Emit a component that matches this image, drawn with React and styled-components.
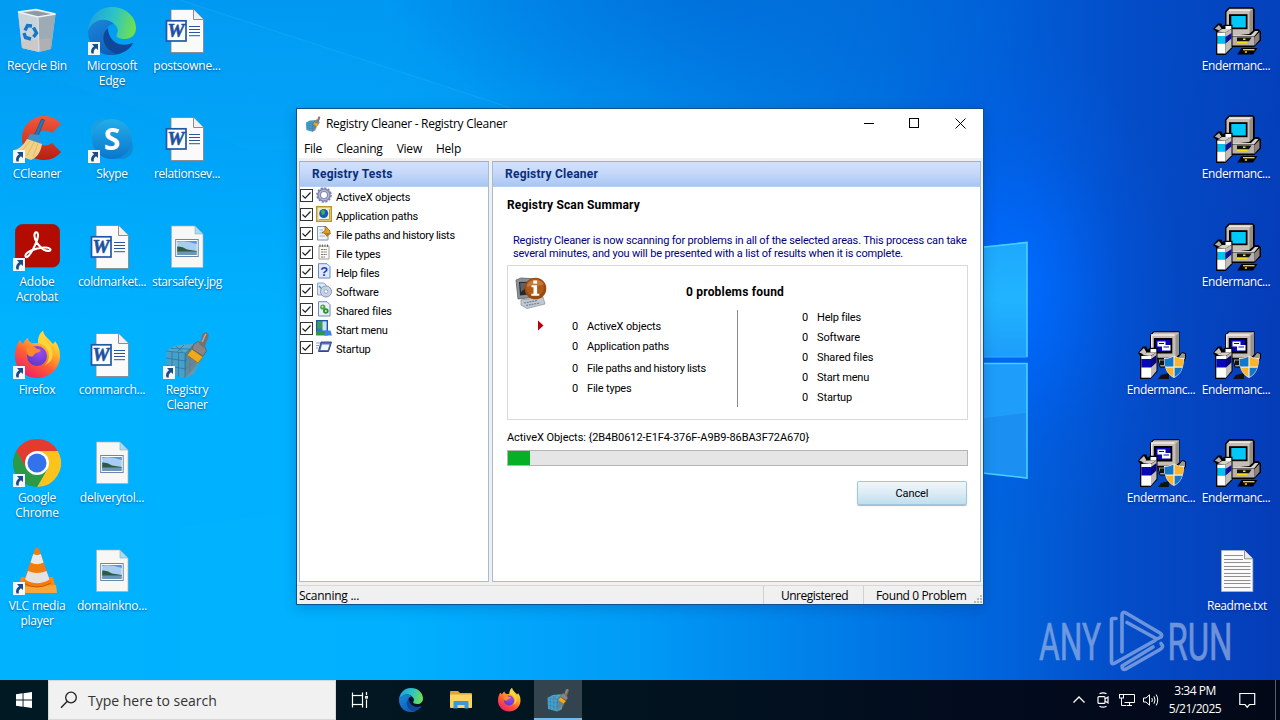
import React from "react";
import styled, { createGlobalStyle, css } from "styled-components";

const ui = `"Open Sans", "Noto Sans", sans-serif`;
const classic = `Roboto, "Liberation Sans", sans-serif`;

const GlobalStyle = createGlobalStyle`
  * { box-sizing: border-box; }
  body { margin: 0; overflow: hidden; font-family: ${ui}; font-size: 12px; }
  svg { display: block; flex: none; }
`;

/* ---------- desktop ---------- */

const Screen = styled.div`
  position: relative;
  width: 1280px;
  height: 720px;
  display: grid;
  grid-template-rows: 680px 40px;
  overflow: hidden;
  background: #0078e0;
`;

const Wallpaper = styled.svg`
  position: absolute;
  inset: 0;
`;

const Desktop = styled.main`
  position: relative;
  display: flex;
  justify-content: space-between;
  padding-right: 6px;
`;

const IconGrid = styled.div`
  display: grid;
  grid-template-rows: repeat(6, 108px);
  grid-auto-columns: 74px;
  grid-auto-flow: column;
  column-gap: 1px;
`;

const Shortcut = styled.div`
  position: relative;
  display: flex;
  flex-direction: column;
  align-items: center;
  padding-top: 7px;
  ${(p) => p.$row && css`grid-row: ${p.$row};`}
  ${(p) => p.$col && css`grid-column: ${p.$col};`}
`;

const ShortcutLabel = styled.span`
  margin-top: 3px;
  width: 80px;
  padding-right: ${(p) => p.$trim || 0}px;
  color: #fff;
  font-size: 12px;
  line-height: 15px;
  letter-spacing: ${(p) => p.$spacing ?? -0.25}px;
  text-align: center;
  white-space: pre-line;
  text-shadow: 0 1px 2px rgba(0, 20, 70, 0.55);
`;

const ArrowBadge = styled.svg`
  position: absolute;
  left: 13px;
  top: 42px;
`;

/* ---------- window ---------- */

const Window = styled.section`
  position: absolute;
  left: 296px;
  top: 108px;
  width: 688px;
  height: 497px;
  display: flex;
  flex-direction: column;
  background: #f0f0f0;
  border: 1px solid #10508f;
  box-shadow: 0 3px 12px rgba(0, 20, 70, 0.2);
  color: #000;
`;

const TitleBar = styled.header`
  display: flex;
  align-items: center;
  height: 30px;
  padding: 0 0 0 8px;
  background: #fff;
`;

const Title = styled.h1`
  flex: 1;
  margin: 0 0 0 5px;
  font-size: 12px;
  font-weight: 400;
  line-height: 16px;
  letter-spacing: -0.3px;
`;

const CaptionButton = styled.button`
  display: flex;
  align-items: center;
  justify-content: center;
  width: 46px;
  height: 30px;
  padding: 0 0 2px;
  border: 0;
  background: transparent;
`;

const MenuBar = styled.nav`
  display: flex;
  gap: 14px;
  height: 19px;
  padding-left: 7px;
  background: #fff;
`;

const MenuItem = styled.span`
  line-height: 20px;
  letter-spacing: -0.22px;
`;

const Body = styled.div`
  display: grid;
  grid-template-columns: 190px 489px;
  gap: 3px;
  height: 421px;
  margin: 3px 0 0 2px;
`;

const Panel = styled.section`
  display: flex;
  flex-direction: column;
  border: 1px solid #a9bccf;
  border-top-color: #8fb4e0;
  background: #fff;
`;

const PanelHeader = styled.h2`
  height: 25px;
  margin: 0;
  padding-left: 12px;
  background: linear-gradient(#d2e0fd, #c6d8fa 45%, #a8c7f2);
  border-bottom: 1px solid #b6cff2;
  color: #0a2f78;
  font: 700 12px/25px ${classic};
  letter-spacing: 0.23px;
`;

const TestRow = styled.label`
  display: flex;
  align-items: flex-start;
  height: 19px;
  font: 11px/22px ${classic};
  letter-spacing: ${(p) => p.$spacing ?? -0.1}px;
`;

const CheckBox = styled.span`
  display: flex;
  width: 13px;
  height: 13px;
  margin: 2px 3px 0 0;
  border: 1px solid #333;
  background: #fff;
`;

const TestIcon = styled.svg`
  margin: 0 4px 0 0;
`;

const Content = styled.div`
  display: flex;
  flex-direction: column;
  align-items: flex-start;
  padding: 10px 12px 0 14px;
  font: 11px/13px ${classic};
`;

const Heading = styled.h3`
  margin: 0;
  font: 700 12px/16px ${classic};
  letter-spacing: 0.16px;
`;

const Intro = styled.p`
  margin: 21px 0 0 6px;
  color: #000080;
  white-space: pre;
  letter-spacing: -0.165px;
`;

const Summary = styled.div`
  display: flex;
  flex-direction: column;
  width: 461px;
  height: 155px;
  margin-top: 5px;
  padding: 11px 7px 0;
  border: 1px solid #d9d9d9;
`;

const SummaryHead = styled.div`
  display: flex;
  height: 33px;
`;

const SummaryTitle = styled.h3`
  margin: 7px 0 0 139px;
  font: 700 12px/16px ${classic};
  letter-spacing: 0.2px;
`;

const Columns = styled.div`
  display: flex;
  align-items: flex-start;
`;

const PointerSlot = styled.div`
  display: flex;
  width: 57px;
  padding: 10px 0 0 23px;
`;

const CountList = styled.div`
  display: flex;
  flex-direction: column;
  width: ${(p) => p.$width}px;
  margin-top: ${(p) => p.$top}px;
`;

const Count = styled.div`
  display: flex;
  gap: 8px;
  height: 20px;
  margin-bottom: ${(p) => p.$gap || 0}px;
  line-height: 20px;
  letter-spacing: ${(p) => p.$spacing ?? -0.12}px;
`;

const CountValue = styled.span`
  width: 7px;
`;

const Divider = styled.div`
  width: 1px;
  height: 97px;
  margin-right: 64px;
  background: #8a8a8a;
`;

const Current = styled.div`
  margin-top: 11px;
  letter-spacing: -0.06px;
`;

const Progress = styled.div`
  width: 461px;
  height: 16px;
  margin-top: 6px;
  border: 1px solid #b5b5b5;
  background: #e5e5e5;
`;

const ProgressFill = styled.div`
  width: 4.8%;
  height: 14px;
  background: #06b025;
`;

const CancelButton = styled.button`
  align-self: flex-end;
  width: 110px;
  height: 24px;
  margin: 15px 1px 0 0;
  padding: 1px 0 0;
  border: 1px solid #9fc6da;
  border-radius: 2px;
  background: linear-gradient(#eef6fa, #dcebf4 50%, #c0dfee);
  box-shadow: 0 1px 1px rgba(0, 0, 0, 0.3);
  color: #000;
  font: 11px/21px ${classic};
  letter-spacing: -0.1px;
`;

const StatusBar = styled.footer`
  display: flex;
  height: 19px;
  margin-top: 3px;
  border-top: 1px solid #d7d7d7;
  font-size: 12px;
  line-height: 20px;
`;

const StatusCell = styled.span`
  width: ${(p) => p.$width}px;
  padding-left: ${(p) => p.$inset}px;
  letter-spacing: ${(p) => p.$spacing}px;
  border-left: ${(p) => (p.$rule ? "1px solid #d0d0d0" : "0")};
  white-space: nowrap;
`;

const Grip = styled.svg`
  margin: 8px 0 0 auto;
`;

/* ---------- taskbar ---------- */

const Taskbar = styled.footer`
  position: relative;
  display: flex;
  background: linear-gradient(90deg, #011923, #01151f 45%, #020c1e 75%, #020818);
  color: #fff;
`;

const TaskButton = styled.div`
  display: flex;
  align-items: center;
  justify-content: center;
  width: ${(p) => p.$width || 48}px;
  height: 40px;
  ${(p) =>
    p.$active &&
    css`
      background: #33444e;
      border-bottom: 2px solid #76b9ed;
      padding-top: 2px;
    `}
`;

const SearchBox = styled.div`
  display: flex;
  align-items: center;
  gap: 10px;
  width: 288px;
  padding-left: 11px;
  border: 1px solid #d6d8da;
  background: #f1f1f1;
  color: #333;
  font-size: 14px;
`;

const Tray = styled.div`
  display: flex;
  align-items: center;
  gap: 8px;
  margin-left: auto;
`;

const Clock = styled.div`
  display: flex;
  flex-direction: column;
  align-items: center;
  width: 56px;
  font-size: 12px;
  line-height: 18px;
  letter-spacing: -0.5px;
`;

const Notifications = styled.div`
  width: 45px;
  height: 40px;
  padding: 12px 0 0 8px;
  border-right: 1px solid #55606a;
  margin-right: 4px;
`;

const Watermark = styled.div`
  position: absolute;
  left: 1036px;
  top: 600px;
`;

/* ---------- icon drawings ---------- */

const RecycleBin = () => (
  <svg width="48" height="48" viewBox="0 0 48 48">
    <path d="M5 5 L23 2.500 L42.500 7 L38 42 L26 45 L9 41 Z" fill="#b9c4cc" />
    <path d="M5 5 L25 9 L26 45 L9 41 Z" fill="#c9d3da" />
    <path d="M25 9 L42.500 7 L38 42 L26 45 Z" fill="#9dabb5" />
    <path d="M7 6 L23 4 L40 7.500 L25 10.500 Z" fill="#8c9aa4" />
    <path d="M8 34 L38 31 L37 42 L26 45 L9 41 Z" fill="#d8b8a8" opacity=".35" />
    <path d="M5 5 L23 2.500 L42.500 7 L25 10 Z" fill="none" stroke="#eef3f6" strokeWidth="1.300" />
    <path d="M25 10 L26 44" stroke="#dfe6ea" />
    <g fill="none" stroke="#1677c8" strokeWidth="3.400">
      <path d="M12 23.500 L14.500 18.500 L19 19" />
      <path d="M20.500 20.500 L23.500 26 L20.500 30" />
      <path d="M18 32 L12.500 30.500 L11 26" />
    </g>
  </svg>
);

const Edge = ({ size = 48 }) => (
  <svg width={size} height={size} viewBox="0 0 48 48">
    <defs>
      <linearGradient id="edgeTop" x1="0" y1=".3" x2="1" y2=".5">
        <stop offset="0" stopColor="#1ea0e0" />
        <stop offset=".5" stopColor="#2bc3c8" />
        <stop offset="1" stopColor="#6fe04f" />
      </linearGradient>
      <linearGradient id="edgeBody" x1="0" y1="0" x2=".6" y2="1">
        <stop offset="0" stopColor="#1b88dc" />
        <stop offset="1" stopColor="#0d5fb8" />
      </linearGradient>
    </defs>
    <path d="M0 24 C1 9 11 0 24 0 C38 0 48 10 48 21 C48 28 43 32 37 32 C31 32 28 30 28.500 28 C31 24 30 20 26 17 C18 10 5 13 0 24 Z" fill="url(#edgeTop)" />
    <path d="M0 24 C4 13 17 9 26 17 C20 17 18 22 18 27 C18 37 26 45 34 46 C17 53 0 42 0 24 Z" fill="url(#edgeBody)" />
    <path d="M20 21 C11 29 16 43 29 47 C36 46 42 42 45 36.500 C44.500 35.500 44 36 43 36.500 C32 41 20 34 20 21 Z" fill="#10479b" />
  </svg>
);

const PageFold = ({ tone = "#8a7f7a" }) => (
  <>
    <path d="M8 2.500 H30.500 L40.500 12.500 V45.500 H8 Z" fill="#fbfafa" stroke={tone} strokeWidth=".8" />
    <path d="M30.500 2.500 V12.500 H40.500" fill="#eef1f3" stroke={tone} strokeWidth=".9" />
  </>
);

const WordDoc = () => (
  <svg width="48" height="48" viewBox="0 0 48 48">
    <PageFold />
    <path d="M26 19.500 H37 M26 22.500 H37 M26 25.500 H37 M26 28.700 H37" stroke="#2b579a" strokeWidth="1" />
    <rect x="3.500" y="13.800" width="19.500" height="20.200" fill="#fff" stroke="#2257a8" strokeWidth="1.700" />
    <text x="13" y="30" fontFamily="Liberation Serif, serif" fontWeight="700" fontStyle="italic" fontSize="19" textAnchor="middle" textLength="17" lengthAdjust="spacingAndGlyphs" fill="#1d50a2" stroke="#1d50a2" strokeWidth=".6">W</text>
  </svg>
);

const ImageDoc = () => (
  <svg width="48" height="48" viewBox="0 0 48 48">
    <path d="M8.500 3 H32 L40 11 V44.500 H8.500 Z" fill="#f7f7f5" stroke="#b0b0aa" strokeWidth=".7" />
    <path d="M32 3 V11 H40 Z" fill="#a9dcf2" stroke="#8fb0b8" strokeWidth=".6" />
    <rect x="12.700" y="16.500" width="22.500" height="17" fill="#fff" stroke="#6a86a8" strokeWidth="1" />
    <rect x="14.200" y="18" width="19.500" height="14" fill="#a8cdf0" />
    <path d="M14.200 19 Q22 17 33.700 21 V18 H14.200 Z" fill="#5c94dc" />
    <path d="M14.200 23.500 Q19 23 24 26.500 L33.700 28 V29 H14.200 Z" fill="#2e5a44" />
    <path d="M14.200 28.500 H33.700 V32 H14.200 Z" fill="#6d96b8" />
  </svg>
);

const TextDoc = () => (
  <svg width="48" height="48" viewBox="0 0 48 48">
    <path d="M8.500 3.500 H31.500 L39.800 11.800 V44.500 H8.500 Z" fill="#fafafa" stroke="#b8b8b8" strokeWidth=".7" />
    <path d="M31.500 3.500 V11.800 H39.800" fill="#e9e9e9" stroke="#777" strokeWidth=".8" />
    <path d="M11 8.500 H30 M11 12.500 H30 M11 15.500 H37.500 M11 19.500 H37.500 M11 22.500 H37.500 M11 26.500 H37.500 M11 29.500 H37.500 M11 33.500 H37.500 M11 36.500 H37.500 M11 40.500 H37.500" stroke="#8f8f8f" strokeWidth="1" />
  </svg>
);

const CCleaner = () => (
  <svg width="48" height="48" viewBox="0 0 48 48">
    <defs>
      <linearGradient id="ccRed" x1="0" y1="0" x2="0" y2="1">
        <stop offset="0" stopColor="#f4593c" />
        <stop offset="1" stopColor="#b81f12" />
      </linearGradient>
    </defs>
    <path d="M48 9 C43 3 37 1 31 1 C19 1 9 11 9 23 C9 36 19 45 31 45 C38 45 44 42 48 37 L39 28 C33 33 23 30 23 23 C23 16 32 13 39 18 Z" fill="url(#ccRed)" />
    <path d="M28.500 4 L31.500 5 L25 21 L21.500 20 Z" fill="#2478b8" stroke="#14507f" strokeWidth=".7" />
    <path d="M17 19 L26 20 L29 29 L14 25 Z" fill="#3c93cc" />
    <path d="M14 24 L29 29 C28 36 25 42 18 45 L7 41 L1 35 C7 34 11 29 14 24 Z" fill="#f3d287" />
    <path d="M17 26 L8 37 M21 27 L14 41 M25 28.500 L20 42" stroke="#e0b968" strokeWidth="1" />
  </svg>
);

const Skype = () => (
  <svg width="48" height="48" viewBox="0 0 48 48">
    <defs>
      <linearGradient id="skype" x1="0" y1="0" x2="0" y2="1">
        <stop offset="0" stopColor="#22aeea" />
        <stop offset="1" stopColor="#0a76cc" />
      </linearGradient>
    </defs>
    <circle cx="15" cy="16" r="12.500" fill="#1a9fe4" />
    <circle cx="33" cy="32" r="12" fill="#0f8bd8" />
    <circle cx="24" cy="24" r="20" fill="url(#skype)" />
    <text x="24" y="34.500" textAnchor="middle" fontFamily="Open Sans, sans-serif" fontWeight="700" fontSize="30" fill="#fff">S</text>
  </svg>
);

const Acrobat = () => (
  <svg width="48" height="48" viewBox="0 0 48 48">
    <rect x="2.500" y="1.500" width="44" height="42.500" rx="7" fill="#b30b00" stroke="#8f1a10" strokeWidth=".8" />
    <path d="M12.500 33 C12 29 22 25 31 24.500 C38 24 39 28 35.500 28 C29 28 22 19 21.500 13 C21 8 25.500 8 25 13 C24 20 17 33 14 34 C13 34.300 12.500 34 12.500 33 Z" fill="none" stroke="#fff" strokeWidth="2.100" />
  </svg>
);

const Firefox = ({ size = 48 }) => (
  <svg width={size} height={size} viewBox="0 0 48 48">
    <defs>
      <linearGradient id="ffBody" x1=".85" y1=".05" x2=".25" y2="1">
        <stop offset="0" stopColor="#fff04a" />
        <stop offset=".3" stopColor="#ffb52a" />
        <stop offset=".62" stopColor="#ff5a36" />
        <stop offset="1" stopColor="#ee1b6c" />
      </linearGradient>
      <radialGradient id="ffGlobe" cx=".6" cy=".3" r=".8">
        <stop offset="0" stopColor="#a04bf0" />
        <stop offset="1" stopColor="#5337c8" />
      </radialGradient>
    </defs>
    <path d="M7 9 C8 11 9 12 10 13 C11 10 13 8 15 7 C15 9 16 11 19 12 L25 12 C25 6 27 2 30 0 C31 5 36 8 40 13 C42 11 42 11 42 10 C46 15 47 20 47 25 C47 38 36 47 24.500 47 C12 47 2 38 2 25 C2 18 4 13 7 9 Z" fill="url(#ffBody)" />
    <circle cx="24" cy="25" r="10" fill="url(#ffGlobe)" />
    <path d="M14 17 C17 15 21 15 24 18 C27 18 28 19 27.500 20 C26 22 22 21 21 24 C20 25.500 19 26 16 25 C13.500 23 13 20 14 17 Z" fill="#ff8a2c" />
    <path d="M25 12 C31 13 36 18 36 25 C36 29 34 32 32 34 C40 31 42 22 37 15 C34 11 31 7 30 0 C27 2 25 6 25 12 Z" fill="#ffd43a" />
  </svg>
);

const Chrome = () => (
  <svg width="48" height="48" viewBox="0 0 48 48">
    <path d="M24 0 A24 24 0 0 1 44.800 12 L24 12 L13.600 30 L3.200 12 A24 24 0 0 1 24 0 Z" fill="#e33b2e" />
    <path d="M44.800 12 A24 24 0 0 1 24 48 L34.400 30 L24 12 Z" fill="#fcc31c" />
    <path d="M3.200 12 A24 24 0 0 0 24 48 L34.400 30 L13.600 30 Z" fill="#2a9a47" />
    <circle cx="24" cy="24" r="12" fill="#fff" />
    <circle cx="24" cy="24" r="9.500" fill="#3273ec" />
  </svg>
);

const Vlc = () => (
  <svg width="48" height="48" viewBox="0 0 48 48">
    <path d="M8 30 L40 30 L44 46 L4 46 Z" fill="#f08a1c" />
    <path d="M10 40 L43 38 L44 46 L5 46 Z" fill="#f9a63a" />
    <path d="M22 2 Q24 -1 26 2 L38 36 Q24 44 10 36 Z" fill="#f47b0c" />
    <path d="M20.300 7 Q24 9 27.800 7 L30.500 15.500 Q24 19 17.500 15.500 Z" fill="#e9e9e9" />
    <path d="M15 24 Q24 28 33.500 24 L36.500 32.500 Q24 40 12 32.500 Z" fill="#e2e2e2" />
    <path d="M10 36 Q24 44 38 36" fill="none" stroke="#c85a00" />
  </svg>
);

const BrushCube = ({ size = 48 }) => (
  <svg width={size} height={size} viewBox="0 0 48 48">
    <path d="M3 20 L14 14 L31 13 L32 42 L22 47 L4 42 Z" fill="#48a0ca" />
    <path d="M3 20 L14 14 L31 13 L22 22 Z" fill="#56a8cc" />
    <path d="M22 22 L31 13 L34 34 L22 47 Z" fill="#3888b2" />
    <g fill="none" stroke="#1e6c98" strokeWidth=".9" opacity=".7">
      <path d="M3 27 L22 30 L32 22 M4 34.500 L22 38 L33 30 M9 21 V43.500 M15.500 21.500 V45.500 M22 22 V47 M27 18 V41 M3 20 L22 22 M8 17.500 L26 18 M13 15 L20 21.500 M21 14 L14 21" />
    </g>
    <path d="M24 24 L37 33 L30 44 L22 47 Z" fill="#9a8f80" opacity=".45" />
    <path d="M29 18 L40 26 L35 32 L24 24 Z" fill="#f0a81e" stroke="#9a6a10" strokeWidth=".8" />
    <path d="M31 13 L35 10.500 L41 14 L43.500 20 L40 25 L29 18 Z" fill="#8a8583" stroke="#5c5857" strokeWidth=".7" />
    <path d="M36 13 C39 9 38 5 40 2.500 C42 0 47 2 45.500 6 C43.500 10 43 14 41 17 Z" fill="#77706e" />
    <path d="M39 11 C41 8 41 5 43 3" fill="none" stroke="#b9b3b0" strokeWidth="1.200" />
  </svg>
);

const Installer = () => (
  <svg width="48" height="48" viewBox="0 0 48 48">
    <path d="M12 4.500 L16 0.300 H40 L41.800 2.500 V26.500 L37.500 31 H12 Z" fill="#000" />
    <path d="M13.500 5 L16.500 1.800 H39.500 V25.500 L36.500 28.500 H13.500 Z" fill="#c5bdb6" />
    <path d="M36.500 5 L40 1.800 V25.500 L36.500 28.500 Z" fill="#958e87" />
    <path d="M16 3.200 H37" stroke="#eee9e4" strokeWidth="1.500" />
    <rect x="16" y="7.200" width="18.500" height="15" fill="#000" />
    <rect x="18.300" y="9" width="14.500" height="11.500" fill="#00c8f8" />
    <path d="M18 29 L36 27 L42 22 H45.500 L48 24.500 V33.500 L41 40 H18 Z" fill="#000" />
    <path d="M19 30 H41.500 V38.500 H19 Z" fill="#b9b1aa" />
    <path d="M41.500 30 L46.500 25 V33 L41.500 38.500 Z" fill="#8b847e" />
    <path d="M38 28 L42 24 H45.500 L41 29.500 H19 V28 Z" fill="#d8d2cc" />
    <path d="M24 30.500 H38.500 L36 34.300 H24 Z" fill="#111" />
    <path d="M24 35.500 H34.500" stroke="#f8e010" strokeWidth="1.500" />
    <path d="M30 31.500 H32.500 V33 H30 Z" fill="#f8e010" />
    <path d="M28.500 41 H44.500 L40 47.500 H24.300 Z" fill="#000" />
    <path d="M30 42.700 H41.500" stroke="#f8e010" strokeWidth="1.300" />
    <path d="M31.800 45 H34" stroke="#f8e010" strokeWidth="1.500" />
    <path d="M0 22 L5 16.500 H8.500 L9.500 19 L12 17.800 H19.500 V41 L12.500 48 H3 V24.500 Z" fill="#000" />
    <path d="M1.800 21.500 L6 18 L8.500 21.500 L6 23.500 Z" fill="#b5b0ab" />
    <path d="M12.500 19 H18.300 V22 H12.500 Z" fill="#fff" />
    <path d="M5 24.500 L9 22 L18.300 22 L12.300 25.500 Z" fill="#d6d0ca" />
    <rect x="4.300" y="25.500" width="8.200" height="3.500" fill="#fff" />
    <rect x="4.300" y="29" width="8.200" height="7.500" fill="#00c0f4" />
    <rect x="4.300" y="36.500" width="8.200" height="10" fill="#fff" />
    <path d="M12.500 25.500 L18.500 22 V40.500 L12.500 46.500 Z" fill="#c3bcb6" />
    <path d="M12.500 30 L18.500 26 V31.500 L12.500 36.500 Z" fill="#101090" />
  </svg>
);

const InstallerShield = () => (
  <svg width="48" height="48" viewBox="0 0 48 48">
    <path d="M12 4 L15.500 0.300 H41.500 V24 L37.500 28 H12 Z" fill="#000" />
    <path d="M13 4.500 L16 1.300 H41 V23 L37.500 26.700 H13 Z" fill="#c5bdb6" />
    <path d="M13.700 24 V4 H36.500" fill="none" stroke="#f2eeea" strokeWidth="1.300" />
    <path d="M37.500 5 L41 1.500 V23 L37.500 26.500 Z" fill="#9a938c" />
    <rect x="15.800" y="7" width="18.500" height="15.500" fill="#000" />
    <rect x="17.800" y="9" width="14.500" height="11.500" fill="#0808b0" />
    <rect x="19.500" y="10.500" width="8" height="5" fill="#fff" />
    <rect x="24" y="14" width="8.500" height="5.500" fill="#fff" />
    <path d="M21 12.500 H26 M25.500 16 H31" stroke="#0808b0" strokeWidth="1" />
    <path d="M20 28 H39 L44 21.500 L47.500 22.500 V28 L38 36 H22 Z" fill="#a09890" stroke="#000" strokeWidth="1" />
    <path d="M22 29.500 H26 V34 H22 Z M23 44 L31 42 V48 H20 Z" fill="#111" />
    <path d="M0 22 L5 15.500 H8.500 L9.500 18.500 L12 16.800 H19.500 V40.500 L12.500 48 H2 V24.500 Z" fill="#000" />
    <path d="M1.300 21.500 L6 17 L8.500 21.500 L6 23.500 Z" fill="#c9c4bf" />
    <path d="M12.500 18 H18.300 V21.500 H12.500 Z" fill="#fff" />
    <path d="M4 24 L9 21.500 L18.300 21.500 L12.300 25 Z" fill="#d6d0ca" />
    <rect x="3.300" y="25" width="9.700" height="21.700" fill="#fff" />
    <rect x="3.300" y="28" width="9.700" height="8.500" fill="#0808b8" />
    <path d="M13 25 L18.500 21.500 V40 L13 46.500 Z" fill="#c3bcb6" />
    <path d="M13 28 L18.500 24 V31.500 L13 36.500 Z" fill="#08087a" />
    <path d="M26 27 C30 27 33 26.500 36 24.500 C39 26.500 42 27 46 27 C46 37 43 43.500 36 47 C29 43.500 26 37 26 27 Z" fill="#f0eee6" />
    <path d="M26.500 28 C30 28 33 27.300 35.400 25.600 V35.600 H27.400 C26.700 33.500 26.500 31 26.500 28 Z" fill="#1478c8" />
    <path d="M45.500 28 C42 28 39 27.300 36.600 25.600 V35.600 H44.600 C45.300 33.500 45.500 31 45.500 28 Z" fill="#fbb52c" />
    <path d="M27.800 36.800 H35.400 V46 C31.700 44 29 41 27.800 36.800 Z" fill="#fbb52c" />
    <path d="M44.200 36.800 H36.600 V46 C40.300 44 43 41 44.200 36.800 Z" fill="#1478c8" />
  </svg>
);

const InfoComputer = () => (
  <svg width="32" height="32" viewBox="0 0 32 32">
    <path d="M1 3 L6 1 L23 2 L22 20 L3 22 Z" fill="#8e9296" stroke="#5c6064" strokeWidth=".8" />
    <path d="M4 5 L19 4.500 L18 17 L5 18.500 Z" fill="#26292c" />
    <path d="M5 6 L17 5.500 L6 15 Z" fill="#5d6266" />
    <path d="M6 23 L28 20 L30 27 L12 31.500 L6 28 Z" fill="#c2c9d2" stroke="#878e96" strokeWidth=".7" />
    <path d="M9 26 L22 23.500 M11 28.500 L25 26" stroke="#6f7e92" strokeWidth="1.200" strokeDasharray="2 .8" />
    <circle cx="20.500" cy="11.500" r="10.800" fill="#9c4a0c" />
    <circle cx="20" cy="10.500" r="9" fill="#b05a16" />
    <path d="M12 8 C14 2 26 1 29 7 C24 10 17 8 12 10 Z" fill="#d89a5c" opacity=".5" />
    <rect x="18.300" y="3.500" width="3.800" height="3.200" fill="#fff" />
    <path d="M16.500 8.300 H22.100 V16.700 H24.200 V18.700 H16.300 V16.700 H18.500 V10.300 H16.500 Z" fill="#fff" />
  </svg>
);

const testArt = {
  gear: (
    <>
      <circle cx="8" cy="8" r="7" fill="none" stroke="#7c80a8" strokeWidth="1.600" strokeDasharray="2.200 1.465" />
      <circle cx="8" cy="8" r="4.900" fill="none" stroke="#8589b0" strokeWidth="3.900" />
      <circle cx="8" cy="8" r="4.700" fill="none" stroke="#b4b8d6" strokeWidth="1.300" />
    </>
  ),
  globe: (
    <>
      <rect x=".7" y=".7" width="14.600" height="14.600" fill="#f4e48c" stroke="#b8982c" strokeWidth="1.400" />
      <rect x="2.500" y="2.500" width="10.500" height="10.500" fill="#e8f0fc" />
      <circle cx="7.700" cy="7.500" r="4.500" fill="#1a58b8" />
      <path d="M5 5 Q8 2 9 6 Q9 9 6 9 Z" fill="#3cb44a" />
      <path d="M13.500 3 V13.500 H3" fill="none" stroke="#c8a030" strokeWidth="1" />
    </>
  ),
  paths: (
    <>
      <path d="M1.500 1.500 H10 L12 4 V15 H1.500 Z" fill="#eef3fb" stroke="#8294b4" />
      <path d="M3.500 5 H7 M3.500 8 H7 M3.500 11 H9" stroke="#9fb0cc" />
      <path d="M9 1 L14 6 V9 H10 L6 7.500 L9 6 Z" fill="#e0a020" stroke="#8a5c10" strokeWidth=".7" />
      <path d="M8 8 L15 8 L11 12 Z" fill="#b87818" />
    </>
  ),
  notes: (
    <>
      <path d="M3 2 H13 V15 H3 Z" fill="#fbfbf2" stroke="#a0a098" />
      <path d="M5 5.500 H11 M5 8 H11 M5 10.500 H11 M5 13 H9" stroke="#777" strokeDasharray="2 .6" />
      <path d="M4 .5 V3 M6.500 .5 V3 M9 .5 V3 M11.500 .5 V3" stroke="#666" />
    </>
  ),
  help: (
    <>
      <path d="M2.500 .7 H11 L14 3.700 V15 H2.500 Z" fill="#dce9fb" stroke="#7288b8" />
      <text x="8" y="13" textAnchor="middle" fontFamily="Liberation Sans, sans-serif" fontWeight="700" fontSize="13" fill="#1c44a8">?</text>
    </>
  ),
  disc: (
    <>
      <path d="M1.500 1 H8 L10 3 V13 H1.500 Z" fill="#dbe7f6" stroke="#8ea2c2" />
      <path d="M3 4 L7 8" stroke="#4a90d0" strokeWidth="1.500" />
      <circle cx="10" cy="9.500" r="5.500" fill="#c9d2ea" stroke="#8a93b8" />
      <path d="M10 9.500 L6 6 A5 5 0 0 1 10 4.500 Z" fill="#a8e0c8" />
      <circle cx="10" cy="9.500" r="1.800" fill="#fff" stroke="#8a93b8" strokeWidth=".8" />
    </>
  ),
  shared: (
    <>
      <path d="M2.500 .7 H11 L14 3.700 V15 H2.500 Z" fill="#e8f0fb" stroke="#7288b8" />
      <circle cx="6.800" cy="6" r="2.600" fill="#3fa545" />
      <circle cx="9.800" cy="10" r="2.800" fill="#2f9038" />
      <circle cx="6.500" cy="5.700" r="1" fill="#d8f4a0" />
      <circle cx="9.800" cy="10" r="1" fill="#d8f4a0" />
    </>
  ),
  start: (
    <>
      <rect x=".5" y=".5" width="11" height="14" fill="#2a78d0" stroke="#2058a0" />
      <rect x="1.500" y="1.500" width="5" height="7" fill="#3fa04a" />
      <rect x="6.500" y="1.500" width="4" height="9" fill="#cfe2f6" />
      <path d="M0 11.500 H12 V15.500 H0 Z" fill="#2f9a3c" />
      <path d="M9 10.500 H14.500 L16 15.500 H8 Z" fill="#3a86e0" />
    </>
  ),
  startup: (
    <>
      <path d="M5 3 H15.500 L12.500 12.500 H2.500 Z" fill="#5a6eb0" stroke="#33488c" />
      <path d="M6 5.500 H13.500 L11.700 11 H4.500 Z" fill="#f2f6fd" />
      <path d="M0 4 H4 M0 6.500 H3 M0 9 H2.500" stroke="#8a9cc8" />
    </>
  ),
};

/* ---------- data ---------- */

const leftIcons = [
  { art: RecycleBin, label: "Recycle Bin" },
  { art: CCleaner, label: "CCleaner", link: true },
  { art: Acrobat, label: "Adobe\nAcrobat", link: true },
  { art: Firefox, label: "Firefox", link: true },
  { art: Chrome, label: "Google\nChrome", link: true },
  { art: Vlc, label: "VLC media\nplayer", link: true },
  { art: Edge, label: "Microsoft\nEdge", link: true },
  { art: Skype, label: "Skype", link: true },
  { art: WordDoc, label: "coldmarket...", spacing: -0.35 },
  { art: WordDoc, label: "commarch..." },
  { art: ImageDoc, label: "deliverytol..." },
  { art: ImageDoc, label: "domainkno..." },
  { art: WordDoc, label: "postsowne..." },
  { art: WordDoc, label: "relationsev...", spacing: -0.35 },
  { art: ImageDoc, label: "starsafety.jpg", spacing: -0.37 },
  { art: BrushCube, label: "Registry\nCleaner", link: true },
];

const rightIcons = [
  { art: InstallerShield, col: 1, row: 4 },
  { art: InstallerShield, col: 1, row: 5 },
  { art: Installer, col: 2, row: 1 },
  { art: Installer, col: 2, row: 2 },
  { art: Installer, col: 2, row: 3 },
  { art: InstallerShield, col: 2, row: 4 },
  { art: Installer, col: 2, row: 5 },
  { art: TextDoc, col: 2, row: 6, label: "Readme.txt" },
];

const tests = [
  { art: "gear", name: "ActiveX objects" },
  { art: "globe", name: "Application paths", spacing: -0.2 },
  { art: "paths", name: "File paths and history lists", spacing: -0.31 },
  { art: "notes", name: "File types", spacing: -0.2 },
  { art: "help", name: "Help files", spacing: -0.25 },
  { art: "disc", name: "Software", spacing: -0.15 },
  { art: "shared", name: "Shared files", spacing: -0.15 },
  { art: "start", name: "Start menu", spacing: -0.25 },
  { art: "startup", name: "Startup", spacing: -0.2 },
];

const Backdrop = () => (
  <Wallpaper width="1280" height="720" viewBox="0 0 1280 720" preserveAspectRatio="none">
    <defs>
      <linearGradient id="base" x1="0" x2="1" y1="0" y2="0">
        <stop offset="0" stopColor="#00b2ff" />
        <stop offset=".3" stopColor="#00b0ff" />
        <stop offset=".5" stopColor="#009af6" />
        <stop offset=".65" stopColor="#007ee8" />
        <stop offset=".78" stopColor="#0064dc" />
        <stop offset=".88" stopColor="#044cc8" />
        <stop offset="1" stopColor="#053cb8" />
      </linearGradient>
      <linearGradient id="shade" x1="0" x2="0" y1="0" y2="1">
        <stop offset="0" stopColor="#0050c8" stopOpacity=".25" />
        <stop offset=".45" stopColor="#0050c8" stopOpacity="0" />
      </linearGradient>
      <radialGradient id="topDark" gradientUnits="userSpaceOnUse" cx="0" cy="0" r="1" gradientTransform="translate(720 -20) scale(330 170)">
        <stop offset="0" stopColor="#0068d4" stopOpacity=".7" />
        <stop offset="1" stopColor="#0068d4" stopOpacity="0" />
      </radialGradient>
      <radialGradient id="glow" gradientUnits="userSpaceOnUse" cx="0" cy="0" r="1" gradientTransform="translate(1010 290) scale(170 260)">
        <stop offset="0" stopColor="#006eff" />
        <stop offset=".3" stopColor="#0066fa" stopOpacity=".75" />
        <stop offset=".65" stopColor="#005ef0" stopOpacity=".25" />
        <stop offset="1" stopColor="#005ce8" stopOpacity="0" />
      </radialGradient>
      <linearGradient id="pane" x1="0" x2="0" y1="0" y2="1">
        <stop offset="0" stopColor="#1ea8fd" />
        <stop offset=".5" stopColor="#20b4ff" />
        <stop offset="1" stopColor="#1e9dfb" />
      </linearGradient>
    </defs>
    <rect width="1280" height="720" fill="url(#base)" />
    <rect width="1280" height="720" fill="url(#shade)" />
    <rect width="1280" height="720" fill="url(#topDark)" />
    <rect width="1280" height="720" fill="url(#glow)" />
    <path d="M180 0 L640 150 H250 L0 60 V0 Z" fill="#10b4ff" opacity=".1" />
    <path d="M180 0 L640 150" stroke="#40c0ff" opacity=".25" />
    <path d="M180 527 L640 460 L640 720 H180 Z" fill="#20c0ff" opacity=".04" />
    <path d="M960 249 L1027 242 V357 H960 Z" fill="url(#pane)" />
    <path d="M960 363 H1027 V478 L960 470 Z" fill="#1e9dfb" />
    <path d="M960 421 L1027 413 V478 L960 470 Z" fill="#1b90f2" />
    <path d="M960 249.500 L1027 242.500 V357 M960 363.500 H1027 V478 L960 470.500" fill="none" stroke="#45d2ff" strokeWidth="1.600" />
    <path d="M960 357 H1027" stroke="#2bb4ff" />
  </Wallpaper>
);

const App = () => (
  <Screen>
    <GlobalStyle />
    <Backdrop />

    <Desktop>
      <IconGrid>
        {leftIcons.map(({ art: Art, label, link, spacing }) => (
          <Shortcut key={label}>
            <Art />
            {link && (
              <ArrowBadge width="12" height="13" viewBox="0 0 12 13">
                <rect width="12" height="13" fill="#f4f8fb" />
                <path d="M4 2 H10 V8 L8 6.200 C6 7.500 5.500 9 5.800 11.500 H3.500 C2.300 8.500 3.500 6 6 4.200 Z" fill="#1d4b86" />
              </ArrowBadge>
            )}
            <ShortcutLabel $spacing={spacing}>{label}</ShortcutLabel>
          </Shortcut>
        ))}
      </IconGrid>
      <IconGrid>
        {rightIcons.map(({ art: Art, col, row, label }) => (
          <Shortcut key={`${col}-${row}`} $col={col} $row={row}>
            <Art />
            <ShortcutLabel $spacing={-0.4} $trim={label ? 0 : 2}>{label || "Endermanc..."}</ShortcutLabel>
          </Shortcut>
        ))}
      </IconGrid>
    </Desktop>

    <Watermark>
      <svg width="208" height="80" viewBox="0 -6 208 80">
        <g opacity=".66" fill="#a3bbe8">
          <g fontFamily="Roboto, sans-serif" fontSize="51" stroke="#a3bbe8" strokeWidth=".7">
            <text x="3" y="54" textLength="62" lengthAdjust="spacingAndGlyphs">ANY</text>
            <text x="131.500" y="54" textLength="65" lengthAdjust="spacingAndGlyphs">RUN</text>
          </g>
          <g fill="none" stroke="#a3bbe8" strokeWidth="3.600" strokeLinejoin="round" strokeLinecap="round">
            <path d="M80 12.500 H77 Q75.500 12.500 75.500 14 V56 Q75.500 59 79 57 L119 34.500" />
            <path d="M86 46 V9 Q86 5 90 7 L124 27 Q127.500 29.500 124 31.500 L121 33 L91 16.500" />
            <path d="M125 37.500 Q128.500 41 124 43.500 L90 63 Q86 64.500 86 60 L117 41" />
          </g>
        </g>
      </svg>
    </Watermark>

    <Window>
      <TitleBar>
        <BrushCube size={16} />
        <Title>Registry Cleaner - Registry Cleaner</Title>
        <CaptionButton aria-label="Minimize">
          <svg width="11" height="11"><path d="M1 5.500 H11" stroke="#000" /></svg>
        </CaptionButton>
        <CaptionButton aria-label="Maximize">
          <svg width="11" height="11"><rect x=".5" y=".5" width="9" height="9" fill="none" stroke="#000" /></svg>
        </CaptionButton>
        <CaptionButton aria-label="Close">
          <svg width="11" height="11"><path d="M.5 .5 L10.500 10.500 M10.500 .5 L.5 10.500" stroke="#000" /></svg>
        </CaptionButton>
      </TitleBar>
      <MenuBar>
        <MenuItem>File</MenuItem>
        <MenuItem>Cleaning</MenuItem>
        <MenuItem>View</MenuItem>
        <MenuItem>Help</MenuItem>
      </MenuBar>

      <Body>
        <Panel>
          <PanelHeader>Registry Tests</PanelHeader>
          {tests.map(({ art, name, spacing }) => (
            <TestRow key={name} $spacing={spacing}>
              <CheckBox>
                <svg width="11" height="11"><path d="M1.500 5.500 L4.200 8.200 L9.500 2.500" fill="none" stroke="#222" strokeWidth="1.200" /></svg>
              </CheckBox>
              <TestIcon width="16" height="16" viewBox="0 0 16 16">{testArt[art]}</TestIcon>
              {name}
            </TestRow>
          ))}
        </Panel>

        <Panel>
          <PanelHeader>Registry Cleaner</PanelHeader>
          <Content>
            <Heading>Registry Scan Summary</Heading>
            <Intro>
              {"Registry Cleaner is now scanning for problems in all of the selected areas. This process can take\nseveral minutes, and you will be presented with a list of results when it is complete."}
            </Intro>
            <Summary>
              <SummaryHead>
                <InfoComputer />
                <SummaryTitle>0 problems found</SummaryTitle>
              </SummaryHead>
              <Columns>
                <PointerSlot>
                  <svg width="6" height="11"><path d="M0 .5 L5.500 5.500 L0 10.500 Z" fill="#b80010" /></svg>
                </PointerSlot>
                <CountList $width={165} $top={7}>
                  <Count><CountValue>0</CountValue>ActiveX objects</Count>
                  <Count $gap={2} $spacing={-0.2}><CountValue>0</CountValue>Application paths</Count>
                  <Count $spacing={-0.31}><CountValue>0</CountValue>File paths and history lists</Count>
                  <Count $spacing={-0.2}><CountValue>0</CountValue>File types</Count>
                </CountList>
                <Divider />
                <CountList $width={120} $top={-2}>
                  <Count $spacing={-0.2}><CountValue>0</CountValue>Help files</Count>
                  <Count><CountValue>0</CountValue>Software</Count>
                  <Count><CountValue>0</CountValue>Shared files</Count>
                  <Count $spacing={-0.2}><CountValue>0</CountValue>Start menu</Count>
                  <Count><CountValue>0</CountValue>Startup</Count>
                </CountList>
              </Columns>
            </Summary>
            <Current>{"ActiveX Objects: {2B4B0612-E1F4-376F-A9B9-86BA3F72A670}"}</Current>
            <Progress><ProgressFill /></Progress>
            <CancelButton>Cancel</CancelButton>
          </Content>
        </Panel>
      </Body>

      <StatusBar>
        <StatusCell $width={466} $inset={2} $spacing={-0.26}>Scanning ...</StatusCell>
        <StatusCell $width={100} $inset={17} $spacing={-0.5} $rule>Unregistered</StatusCell>
        <StatusCell $width={108} $inset={12} $spacing={-0.38} $rule>Found 0 Problem</StatusCell>
        <Grip width="10" height="10">
          <path d="M7 1h2v2h-2z M4 4h2v2h-2z M7 4h2v2h-2z M1 7h2v2h-2z M4 7h2v2h-2z M7 7h2v2h-2z" fill="#b8b8b8" />
        </Grip>
      </StatusBar>
    </Window>

    <Taskbar>
      <TaskButton>
        <svg width="16" height="16" viewBox="0 0 16 16">
          <path d="M0 2.200 L6.600 1.300 V7.500 H0 Z M7.500 1.200 L16 0 V7.500 H7.500 Z M0 8.400 H6.600 V14.700 L0 13.800 Z M7.500 8.400 H16 V16 L7.500 14.800 Z" fill="#fff" />
        </svg>
      </TaskButton>
      <SearchBox>
        <svg width="18" height="18" viewBox="0 0 18 18">
          <circle cx="11" cy="6.500" r="5.300" fill="none" stroke="#222" strokeWidth="1.300" />
          <path d="M7.300 10.300 L1 16.800" stroke="#222" strokeWidth="1.400" />
        </svg>
        Type here to search
      </SearchBox>
      <TaskButton>
        <svg width="18" height="18" viewBox="0 0 18 18" fill="none" stroke="#fff" strokeWidth="1.200">
          <path d="M1.500 1.500 V4.500 H11.500 V1.500 M1.500 16.500 V13.500 H11.500 V16.500" />
          <rect x="1.500" y="4.500" width="10" height="9" />
          <path d="M15.500 1 V4 M15.500 8.500 V17" />
          <rect x="14.700" y="5.500" width="1.600" height="1.600" />
        </svg>
      </TaskButton>
      <TaskButton $width={53}><Edge size={24} /></TaskButton>
      <TaskButton $width={47}>
        <svg width="22" height="20" viewBox="0 0 22 20">
          <path d="M0 2 Q0 1 1 1 H8 L10 3 H21 Q22 3 22 4 V7 H0 Z" fill="#e0a52c" />
          <rect y="4.500" width="22" height="13.500" rx=".8" fill="#fcd462" />
          <path d="M3.500 18.500 V12 Q3.500 11 4.500 11 H17.500 Q18.500 11 18.500 12 V18.500 H14.500 V15 H7.500 V18.500 Z" fill="#3c98dc" />
        </svg>
      </TaskButton>
      <TaskButton $width={50}><Firefox size={24} /></TaskButton>
      <TaskButton $active><BrushCube size={24} /></TaskButton>

      <Tray>
        <svg width="16" height="16" viewBox="0 0 16 16" fill="none" stroke="#fff" strokeWidth="1.300">
          <path d="M2.500 10.500 L8 5 L13.500 10.500" />
        </svg>
        <svg width="16" height="16" viewBox="0 0 16 16" fill="none" stroke="#fff" strokeWidth="1.200">
          <rect x="3" y="4.600" width="7" height="6.800" rx="1" />
          <path d="M10 7 L13 5 V11 L10 9 M4.500 1.800 Q8 -.2 11.500 1.800 M4.500 14.200 Q8 16.200 11.500 14.200" />
        </svg>
        <svg width="16" height="16" viewBox="0 0 16 16" fill="none" stroke="#fff">
          <path d="M4.500 2.500 H15.500 V10.500 H5.500 M7.500 13.500 H13 M10.500 10.500 V13.500 M2.500 6 V13.500 H7" />
          <rect x=".5" y="2.500" width="4" height="3.500" fill="#020b1c" />
        </svg>
        <svg width="16" height="16" viewBox="0 0 16 16" fill="none" stroke="#fff">
          <path d="M.5 6 H3 L6.500 2.800 V13.200 L3 10 H.5 Z M8.800 6 Q10 8 8.800 10 M11 4.300 Q13 8 11 11.700 M13.200 2.500 Q16.300 8 13.200 13.500" />
        </svg>
        <Clock>
          <span>3:34 PM</span>
          <span>5/21/2025</span>
        </Clock>
        <Notifications>
          <svg width="17" height="17" viewBox="0 0 17 17" fill="none" stroke="#fff" strokeWidth="1.200">
            <path d="M.8 1.500 H15.700 V12.500 H10.500 L8.200 15.200 L6 12.500 H.8 Z" />
          </svg>
        </Notifications>
      </Tray>
    </Taskbar>
  </Screen>
);

export default App;
